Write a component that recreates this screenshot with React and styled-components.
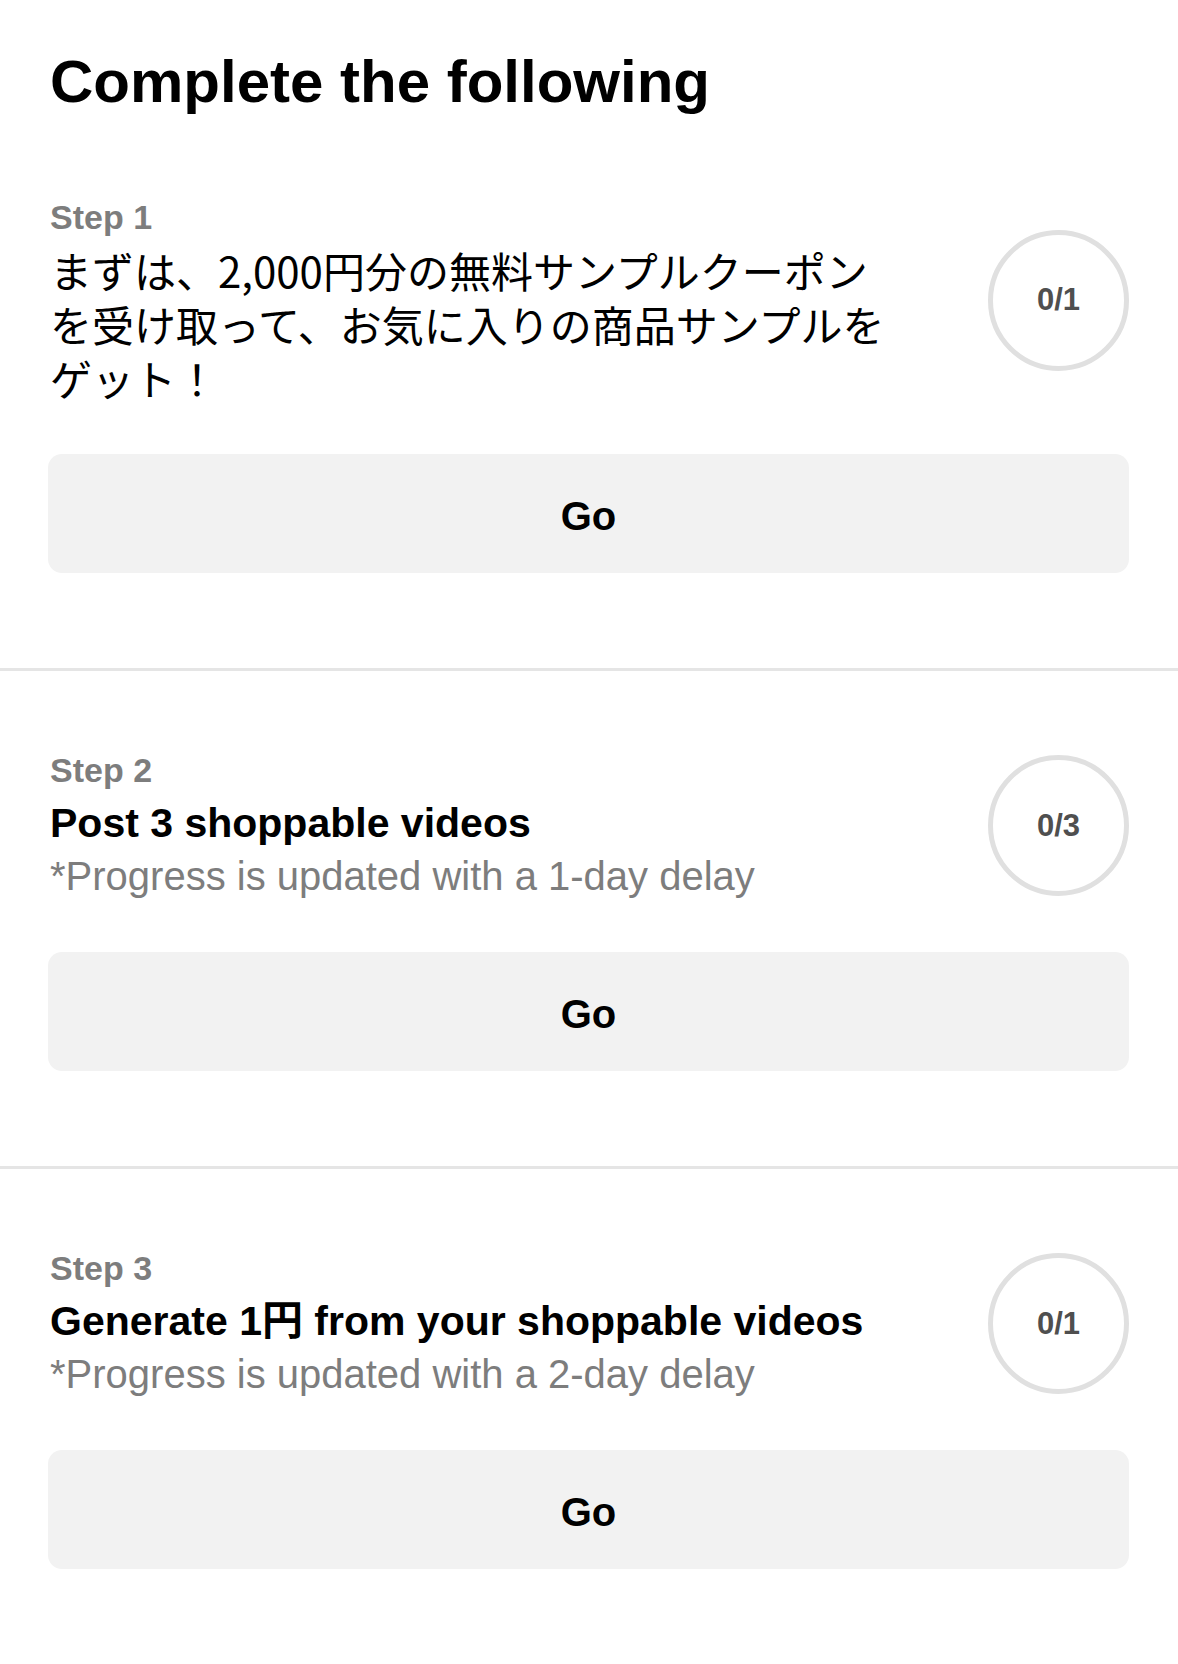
import React from 'react';
import styled, { createGlobalStyle } from 'styled-components';

const steps = [
  {
    step: 1,
    title: 'まずは、2,000円分の無料サンプルクーポンを受け取って、お気に入りの商品サンプルをゲット！',
    jp: true,
    progress: '0/1',
  },
  {
    step: 2,
    title: 'Post 3 shoppable videos',
    note: '*Progress is updated with a 1-day delay',
    progress: '0/3',
  },
  {
    step: 3,
    title: 'Generate 1円 from your shoppable videos',
    note: '*Progress is updated with a 2-day delay',
    progress: '0/1',
  },
];

export default function App() {
  return (
    <>
      <GlobalStyle />
      <Page>
        <Heading>Complete the following</Heading>
        {steps.map((s) => (
          <Section key={s.step}>
            <Row>
              <TextCol>
                <StepLabel>Step {s.step}</StepLabel>
                <TaskTitle $jp={s.jp}>{s.title}</TaskTitle>
                {s.note && <Note>{s.note}</Note>}
              </TextCol>
              <Progress>{s.progress}</Progress>
            </Row>
            <GoButton type='button'>Go</GoButton>
          </Section>
        ))}
      </Page>
    </>
  );
}

const GlobalStyle = createGlobalStyle`
  body {
    margin: 0;
    background: #ffffff;
    font-family: "Liberation Sans", "Noto Sans CJK JP", sans-serif;
    color: #000;
  }
`;

const Page = styled.div`
  padding-top: 46px;
`;

const Heading = styled.h1`
  margin: 0;
  padding: 0 50px;
  font-size: 60px;
  line-height: 72px;
  font-weight: 700;
  color: #000;
`;

const Section = styled.section`
  padding: 77px 49px 95px 48px;
  border-bottom: 3px solid #e5e5e5;

  &:last-child {
    border-bottom: none;
  }
`;

const Row = styled.div`
  display: flex;
  align-items: center;
  justify-content: space-between;
`;

const TextCol = styled.div`
  flex: 1;
  display: flex;
  flex-direction: column;
  padding-left: 2px;
`;

const StepLabel = styled.div`
  font-size: 34px;
  line-height: 44px;
  font-weight: 700;
  color: #7d7d7d;
`;

const TaskTitle = styled.div`
  max-width: 850px;
  margin-top: ${(p) => (p.$jp ? '4px' : '5px')};
  font-family: ${(p) =>
    p.$jp ? '"Noto Sans CJK JP", sans-serif' : '"Liberation Sans", "Noto Sans CJK JP", sans-serif'};
  font-size: ${(p) => (p.$jp ? '42px' : '41px')};
  line-height: ${(p) => (p.$jp ? '54px' : '53px')};
  font-weight: ${(p) => (p.$jp ? 400 : 700)};
  color: #000;
`;

const Note = styled.div`
  font-size: 40px;
  line-height: 53px;
  color: #7d7d7d;
`;

const Progress = styled.div`
  flex-shrink: 0;
  width: 141px;
  height: 141px;
  box-sizing: border-box;
  border: 5px solid #e0e0e0;
  border-radius: 50%;
  display: flex;
  align-items: center;
  justify-content: center;
  font-size: 31px;
  font-weight: 700;
  color: #4f4f4f;
`;

const GoButton = styled.button`
  display: flex;
  align-items: center;
  justify-content: center;
  width: 100%;
  height: 119px;
  margin-top: 49px;
  padding: 6px 0 0;
  border: none;
  border-radius: 14px;
  background: #f2f2f2;
  font-family: "Liberation Sans", sans-serif;
  font-size: 40px;
  font-weight: 700;
  color: #000;
  cursor: pointer;
`;
